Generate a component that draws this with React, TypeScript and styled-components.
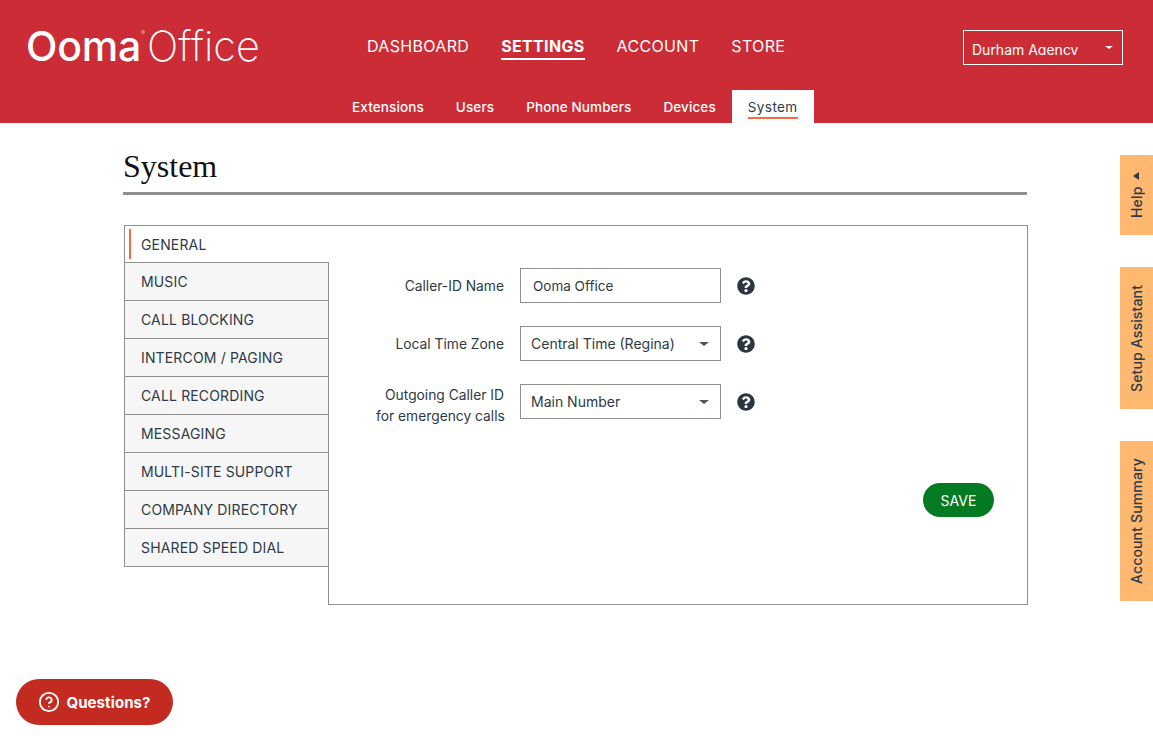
import React from "react";
import styled, { createGlobalStyle } from "styled-components";
import { FaQuestionCircle } from "react-icons/fa";
import { CircleHelp } from "lucide-react";

const Global = createGlobalStyle`
  html, body { margin: 0; padding: 0; background: #fff; }
  body { font-family: Inter, "Liberation Sans", sans-serif; color: #2e3a46; height: 738px; overflow: hidden; }
  * { box-sizing: border-box; }
`;

const Header = styled.header`
  height: 123px;
  background: #cc2c36;
  display: flex;
  flex-direction: column;
`;
const TopRow = styled.div`
  height: 90px;
  display: flex;
  align-items: flex-start;
  padding: 0 30px 0 26px;
`;
const Logo = styled.div`
  width: 341px;
  margin-top: 21px;
  display: flex;
  align-items: baseline;
  color: #fff;
  line-height: 50px;
  white-space: nowrap;
`;
const LogoBrand = styled.span`
  font-weight: 450;
  font-size: 41px;
  letter-spacing: -0.2px;
  position: relative;
`;
const LogoMark = styled.sup`
  position: absolute;
  right: -4px;
  top: 9px;
  font-size: 6px;
  line-height: 6px;
  letter-spacing: 0;
  opacity: 0.55;
`;
const LogoProduct = styled.span`
  font-weight: 200;
  font-size: 41.5px;
  margin-left: 6px;
`;
const MainNav = styled.nav`
  display: flex;
  gap: 32px;
  margin-top: 36px;
  flex: 1;
`;
const MainLink = styled.a<{ $active?: boolean }>`
  color: #fff;
  font-size: 16px;
  letter-spacing: 0.33px;
  line-height: 20px;
  font-weight: ${(p) => (p.$active ? 700 : 400)};
  height: 24px;
  border-bottom: ${(p) => (p.$active ? "2px solid #fff" : "none")};
`;
const AgencySelect = styled.div`
  width: 160px;
  height: 35px;
  margin-top: 30px;
  border: 1px solid #fff;
  color: #fff;
  font-size: 14px;
  line-height: 20px;
  padding: 9px 9px 0 8px;
  display: flex;
  justify-content: space-between;
`;
const AgencyName = styled.span`
  height: 15px;
  overflow: hidden;
`;
const Caret = styled.i<{ $color: string; $size: number }>`
  display: block;
  width: 0;
  height: 0;
  border-left: ${(p) => p.$size}px solid transparent;
  border-right: ${(p) => p.$size}px solid transparent;
  border-top: ${(p) => p.$size - 0.5}px solid ${(p) => p.$color};
`;
const AgencyCaret = styled(Caret)`
  margin-top: 6px;
`;
const SubNav = styled.nav`
  height: 33px;
  display: flex;
  padding-left: 336px;
`;
const SubLink = styled.a<{ $active?: boolean }>`
  padding: 0 16px;
  background: ${(p) => (p.$active ? "#fff" : "transparent")};
  color: ${(p) => (p.$active ? "#2e3a46" : "#fff")};
  font-size: 13.5px;
  letter-spacing: ${(p) => (p.$active ? "0.4px" : "0.12px")};
  font-weight: ${(p) => (p.$active ? 400 : 500)};
  line-height: 35px;
`;
const SubLabel = styled.span`
  display: block;
  height: 29px;
  border-bottom: 2px solid #f26c3f;
`;

const Page = styled.main`
  width: 904px;
  margin-left: 123px;
`;
const Title = styled.h1`
  margin: 0;
  height: 72px;
  padding-top: 25px;
  border-bottom: 3px solid #8f8f8f;
  color: #111;
  font-family: "Liberation Serif", serif;
  font-weight: 400;
  font-size: 32px;
  line-height: 36px;
`;
const Panel = styled.section`
  display: flex;
  margin: 30px -1px 0 1px;
  height: 380px;
  align-items: flex-start;
`;
const Sidebar = styled.ul`
  list-style: none;
  margin: 0 -1px 0 0;
  padding: 0;
  width: 205px;
  flex: none;
  position: relative;
  z-index: 1;
`;
const SideItem = styled.li<{ $active?: boolean }>`
  height: ${(p) => (p.$active ? "37px" : "38px")};
  display: flex;
  align-items: center;
  padding: ${(p) => (p.$active ? "1px" : "0")} 0 0 16px;
  font-size: 14px;
  letter-spacing: 0.15px;
  border-left: 1px solid #8f8f8f;
  border-top: 1px solid #8f8f8f;
  border-right: ${(p) => (p.$active ? "none" : "1px solid #8f8f8f")};
  background: ${(p) => (p.$active ? "#fff" : "#f6f6f6")};
  position: relative;
  &:last-child {
    height: 39px;
    border-bottom: 1px solid #8f8f8f;
    padding-bottom: 1px;
  }
`;
const ActiveMark = styled.span`
  position: absolute;
  left: 4px;
  top: 3px;
  bottom: 3px;
  width: 2px;
  background: #f26c3f;
`;
const Pane = styled.div`
  flex: 1;
  height: 380px;
  border: 1px solid #8f8f8f;
  padding: 42px 33px 0 47px;
  display: flex;
  flex-direction: column;
`;
const Field = styled.div`
  display: flex;
  align-items: center;
  height: 35px;
  margin-bottom: 23px;
`;
const FieldLabel = styled.label<{ $double?: boolean }>`
  width: 128px;
  margin: ${(p) => (p.$double ? "9px" : "2px")} 16px 0 0;
  text-align: right;
  font-size: 13.8px;
  line-height: 21px;
  flex: none;
  white-space: nowrap;
`;
const TextBox = styled.div`
  width: 201px;
  height: 35px;
  border: 1px solid #8f8f8f;
  font-size: 13.5px;
  line-height: 34px;
  padding-left: 12px;
`;
const SelectBox = styled(TextBox)`
  font-size: 14px;
  padding: 0 11px 0 10px;
  display: flex;
  align-items: center;
  justify-content: space-between;
`;
const HelpIcon = styled(FaQuestionCircle)`
  margin-left: 16px;
  width: 18px;
  height: 18px;
  color: #2b3640;
`;
const Actions = styled.div`
  display: flex;
  justify-content: flex-end;
  margin-top: 41px;
`;
const SaveButton = styled.button`
  width: 71px;
  height: 34px;
  border: 0;
  border-radius: 17px;
  background: #047a22;
  color: #fff;
  font-family: inherit;
  font-size: 14px;
`;
const SideTab = styled.aside<{ $top: number; $height: number }>`
  position: fixed;
  right: 0;
  top: ${(p) => p.$top}px;
  width: 33px;
  height: ${(p) => p.$height}px;
  background: #ffb86f;
  writing-mode: vertical-rl;
  transform: rotate(180deg);
  display: flex;
  align-items: center;
  justify-content: center;
  gap: 7px;
  font-size: 14px;
  letter-spacing: 0.15px;
  font-weight: 500;
  color: #2e3a46;
`;
const HelpCaret = styled.i`
  width: 0;
  height: 0;
  border-top: 4px solid transparent;
  border-bottom: 4px solid transparent;
  border-left: 6px solid #2e3a46;
`;
const Questions = styled.button`
  position: fixed;
  left: 16px;
  top: 679px;
  width: 157px;
  height: 46px;
  border: 0;
  border-radius: 23px;
  background: #c42b20;
  color: #fff;
  display: flex;
  align-items: center;
  justify-content: center;
  gap: 6px;
  font-family: inherit;
  font-size: 15px;
  letter-spacing: 0.1px;
  font-weight: 700;
`;

const menu = ["MUSIC", "CALL BLOCKING", "INTERCOM / PAGING", "CALL RECORDING", "MESSAGING", "MULTI-SITE SUPPORT", "COMPANY DIRECTORY", "SHARED SPEED DIAL"];

export default function App() {
  return (
    <>
      <Global />
      <Header>
        <TopRow>
          <Logo>
            <LogoBrand>Ooma<LogoMark>®</LogoMark></LogoBrand>
            <LogoProduct>Office</LogoProduct>
          </Logo>
          <MainNav>
            <MainLink>DASHBOARD</MainLink>
            <MainLink $active>SETTINGS</MainLink>
            <MainLink>ACCOUNT</MainLink>
            <MainLink>STORE</MainLink>
          </MainNav>
          <AgencySelect>
            <AgencyName>Durham Agency</AgencyName>
            <AgencyCaret $color="#fff" $size={4} />
          </AgencySelect>
        </TopRow>
        <SubNav>
          <SubLink>Extensions</SubLink>
          <SubLink>Users</SubLink>
          <SubLink>Phone Numbers</SubLink>
          <SubLink>Devices</SubLink>
          <SubLink $active><SubLabel>System</SubLabel></SubLink>
        </SubNav>
      </Header>
      <Page>
        <Title>System</Title>
        <Panel>
          <Sidebar>
            <SideItem $active><ActiveMark />GENERAL</SideItem>
            {menu.map((m) => <SideItem key={m}>{m}</SideItem>)}
          </Sidebar>
          <Pane>
            <Field>
              <FieldLabel>Caller-ID Name</FieldLabel>
              <TextBox>Ooma Office</TextBox>
              <HelpIcon />
            </Field>
            <Field>
              <FieldLabel>Local Time Zone</FieldLabel>
              <SelectBox>Central Time (Regina)<Caret $color="#4a5560" $size={5} /></SelectBox>
              <HelpIcon />
            </Field>
            <Field>
              <FieldLabel $double>Outgoing Caller ID<br />for emergency calls</FieldLabel>
              <SelectBox>Main Number<Caret $color="#4a5560" $size={5} /></SelectBox>
              <HelpIcon />
            </Field>
            <Actions><SaveButton>SAVE</SaveButton></Actions>
          </Pane>
        </Panel>
      </Page>
      <SideTab $top={155} $height={80}>Help<HelpCaret /></SideTab>
      <SideTab $top={267} $height={142}>Setup Assistant</SideTab>
      <SideTab $top={441} $height={160}>Account Summary</SideTab>
      <Questions><CircleHelp size={22} strokeWidth={2} />Questions?</Questions>
    </>
  );
}
